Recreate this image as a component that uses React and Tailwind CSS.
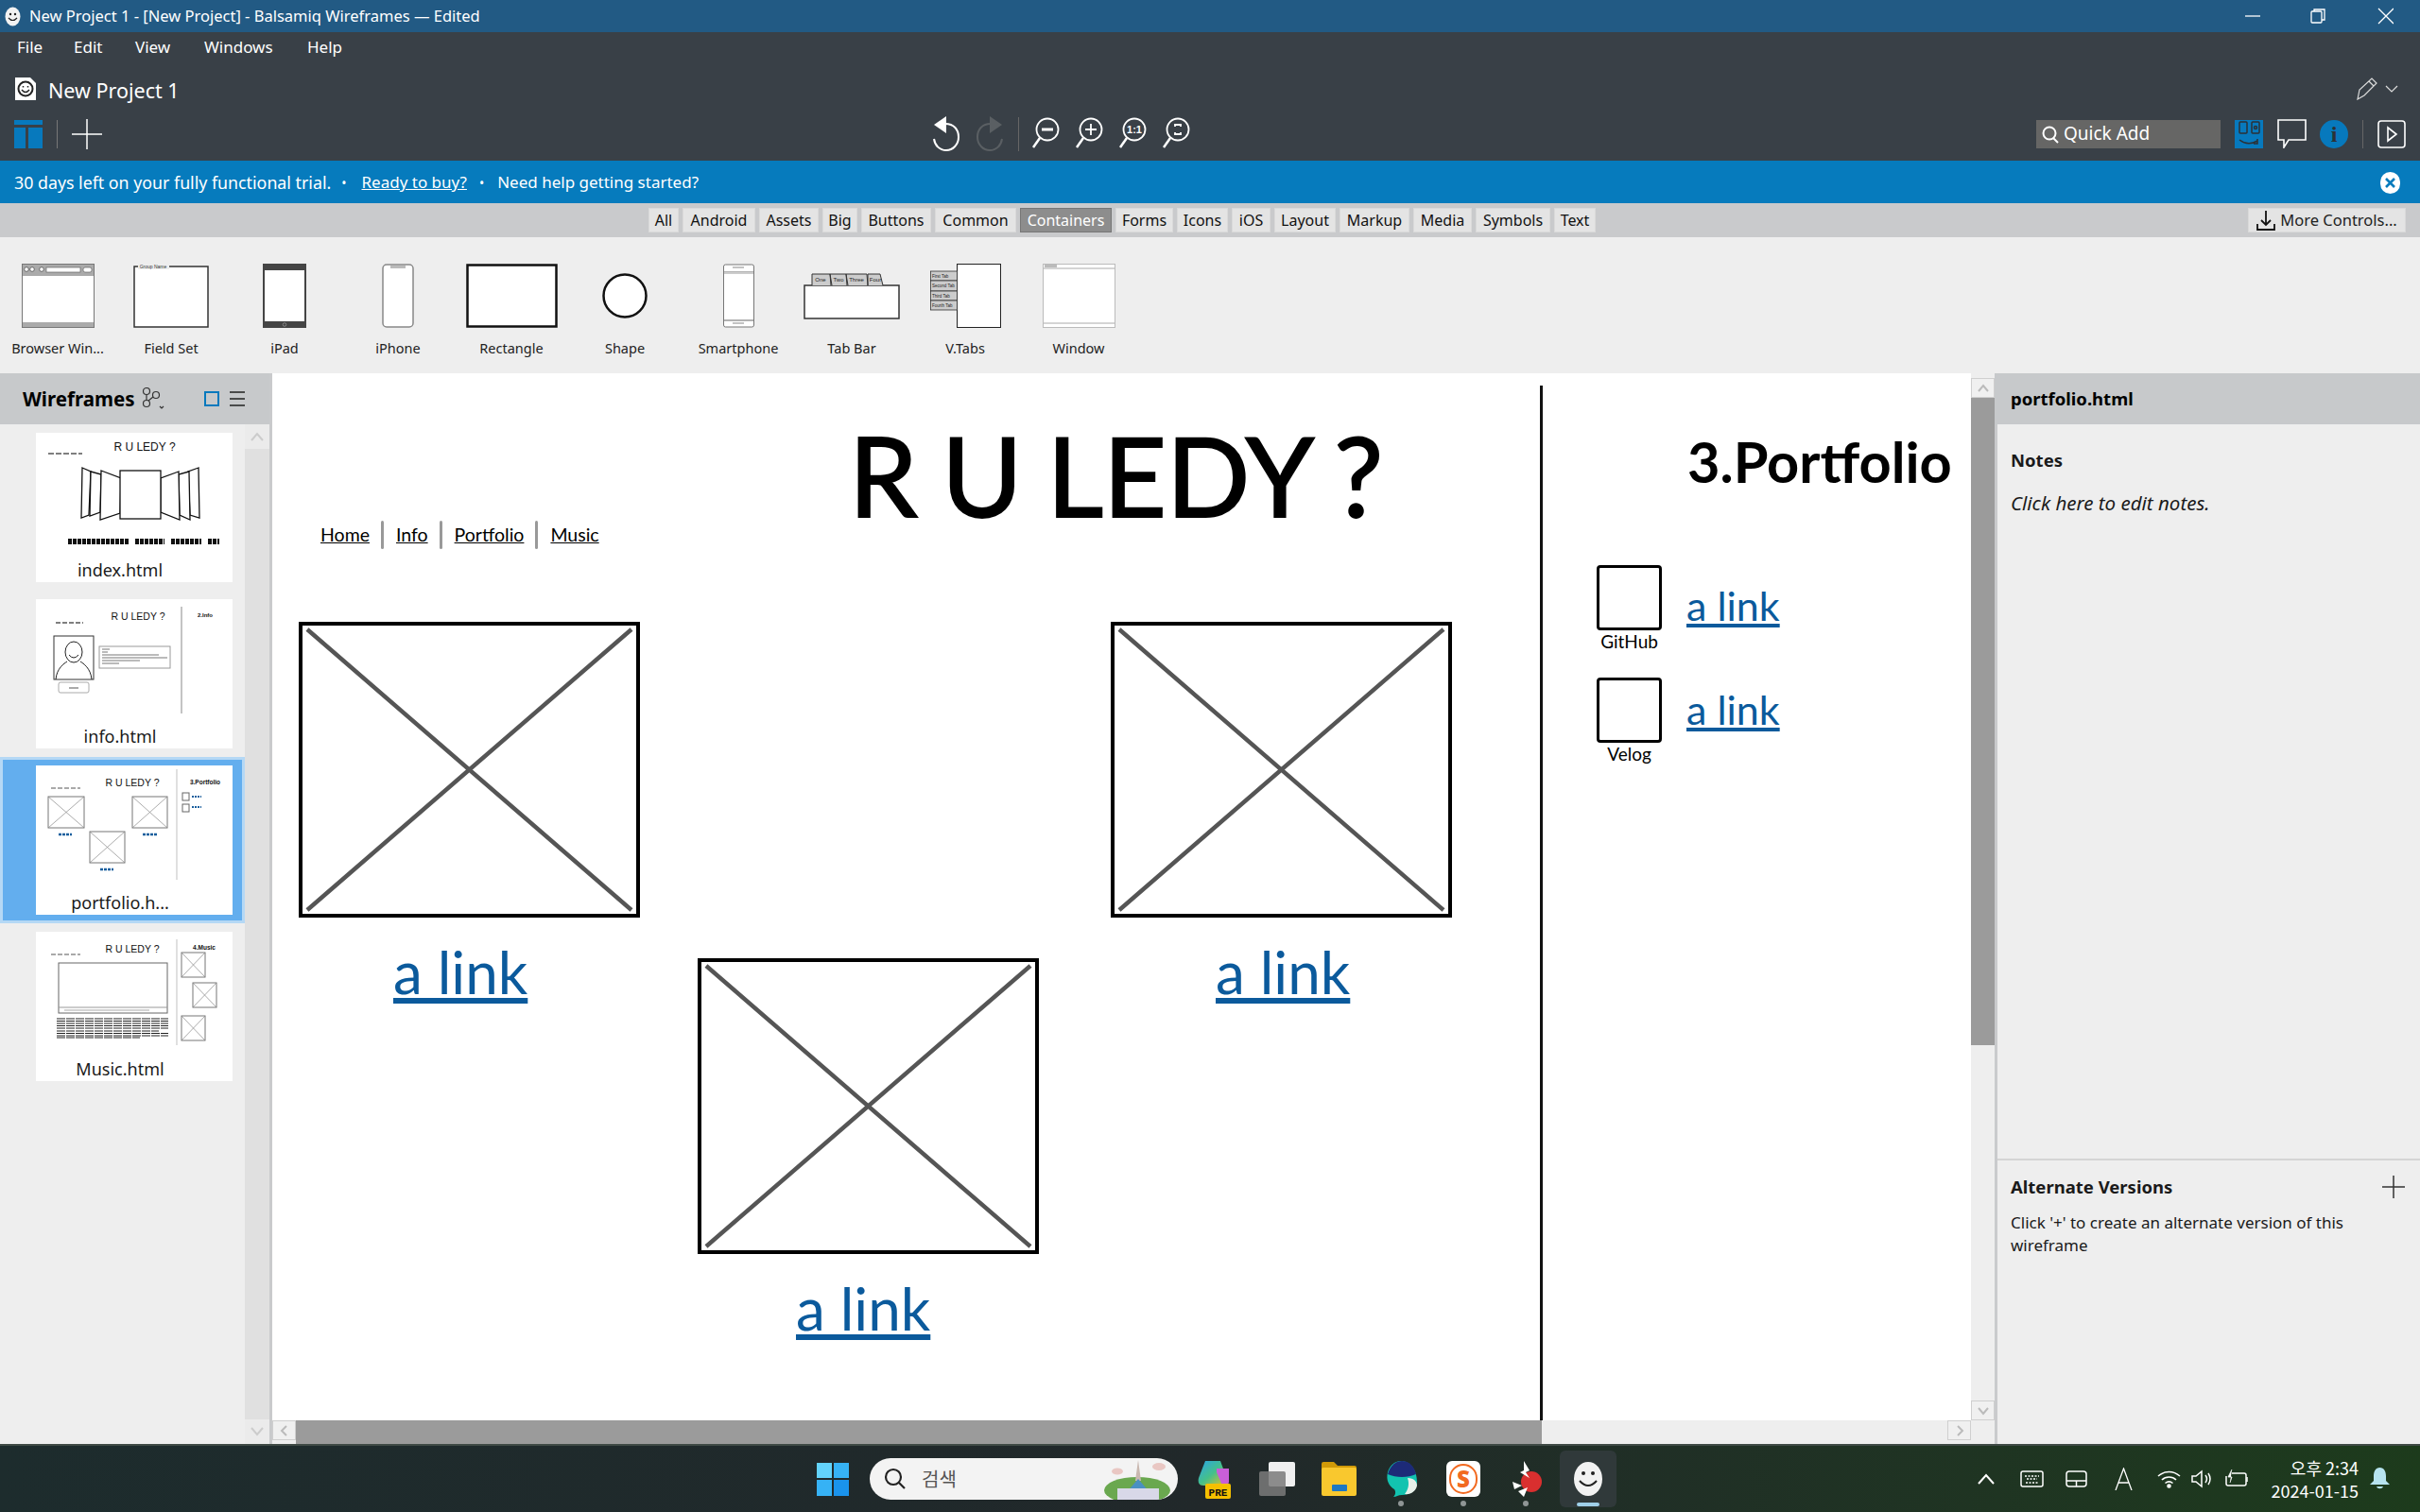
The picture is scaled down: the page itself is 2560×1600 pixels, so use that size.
import React from "react";

const Ph = ({ className }) => (
  <div className={"absolute w-[361px] h-[313px] bg-white border-[4px] border-black " + className}>
    <svg width="353" height="305" viewBox="0 0 353 305" className="block">
      <path d="M5 4 L348 301 M348 4 L5 301" stroke="#555" strokeWidth="4.5" fill="none" />
    </svg>
  </div>
);

const MiniPh = ({ x, y, w, h }) => (
  <g>
    <rect x={x} y={y} width={w} height={h} fill="#fff" stroke="#777" strokeWidth="1" />
    <path d={`M${x} ${y}L${x + w} ${y + h}M${x + w} ${y}L${x} ${y + h}`} stroke="#888" strokeWidth=".7" />
  </g>
);

const ThumbTitle = ({ x, y, t, size = 12, weight = 400 }) => (
  <text x={x} y={y} textAnchor="middle" fontSize={size} fontWeight={weight} fontFamily="Liberation Sans, sans-serif" fill="#111">{t}</text>
);

const Thumb1 = () => (
  <svg width="208" height="130" viewBox="0 0 208 130" className="block">
    <ThumbTitle x={115} y={19} t="R U LEDY ?" size={12} />
    <path d="M13 22H49" stroke="#555" strokeWidth="1.6" strokeDasharray="6 2" />
    <g fill="#fff" stroke="#111" strokeWidth="1.3">
      <path d="M49 37L58 41L56 87L48 90Z" />
      <path d="M58 41L69 44L68 84L57 88Z" />
      <path d="M69 40L90 48L89 85L68 92Z" />
      <path d="M172 37L161 41L163 87L173 90Z" />
      <path d="M162 41L151 44L152 87L163 92Z" />
      <path d="M151 41L132 48L132 84L152 92Z" />
      <rect x="89" y="40" width="43" height="51" />
    </g>
    <path d="M34 115H98M105 115H136M143 115H175M182 115H194" stroke="#111" strokeWidth="6" strokeDasharray="4 1" />
  </svg>
);

const Thumb2 = () => (
  <svg width="208" height="130" viewBox="0 0 208 130" className="block">
    <ThumbTitle x={108} y={22} t="R U LEDY ?" size={10.5} />
    <path d="M21 25H50" stroke="#555" strokeWidth="1.4" strokeDasharray="5 2" />
    <text x="179" y="19" textAnchor="middle" fontSize="6" fontWeight="700" fontFamily="Liberation Sans, sans-serif" fill="#111">2.Info</text>
    <path d="M154 8V121" stroke="#888" strokeWidth="1" />
    <rect x="19" y="39" width="42" height="46" fill="#fff" stroke="#333" />
    <ellipse cx="40" cy="56" rx="9" ry="11" fill="none" stroke="#222" />
    <path d="M21 85C22 73 30 68 33 66M59 85C58 73 50 68 47 66M35 59Q40 65 45 59" fill="none" stroke="#222" />
    <rect x="67" y="50" width="75" height="23" fill="#fff" stroke="#999" />
    <path d="M70 53H78M70 56H76M70 59H130M70 62H139M70 65H110M70 68H88" stroke="#777" strokeWidth="1" />
    <rect x="24" y="88" width="32" height="11" rx="2" fill="#fff" stroke="#aaa" />
    <path d="M35 94H45" stroke="#555" />
  </svg>
);

const Thumb3 = () => (
  <svg width="208" height="130" viewBox="0 0 208 130" className="block">
    <ThumbTitle x={102} y={22} t="R U LEDY ?" size={10.5} />
    <path d="M16 24H47" stroke="#555" strokeWidth="1.2" strokeDasharray="5 2" />
    <MiniPh x={13} y={33} w={38} h={33} />
    <MiniPh x={102} y={33} w={37} h={33} />
    <MiniPh x={57} y={70} w={37} h={33} />
    <g stroke="#1b5f9e" strokeWidth="2.4" strokeDasharray="3 1">
      <path d="M24 73H38M113 73H128M68 110H82" />
    </g>
    <path d="M149 4V121" stroke="#ccc" strokeWidth="1.2" />
    <text x="179" y="20" textAnchor="middle" fontSize="6.5" fontWeight="700" fontFamily="Liberation Sans, sans-serif" fill="#111">3.Portfolio</text>
    <rect x="155" y="29" width="7" height="8" fill="#fff" stroke="#666" />
    <rect x="155" y="41" width="7" height="8" fill="#fff" stroke="#666" />
    <path d="M165 33H175M165 44H175" stroke="#1b5f9e" strokeWidth="2" strokeDasharray="2 1" />
  </svg>
);

const Thumb4 = () => (
  <svg width="208" height="130" viewBox="0 0 208 130" className="block">
    <ThumbTitle x={102} y={22} t="R U LEDY ?" size={10.5} />
    <path d="M16 24H47" stroke="#555" strokeWidth="1.2" strokeDasharray="5 2" />
    <rect x="24" y="33" width="115" height="53" fill="#fff" stroke="#666" />
    <path d="M24 80H139" stroke="#999" />
    <path d="M30 83H120" stroke="#aaa" strokeWidth="1.2" />
    <path d="M22 92H140M22 94.500H140M22 97H140M22 99.500H140M22 102H140M22 105H130M22 107.500H140M22 110H140M22 112H110" stroke="#222" strokeWidth="1" strokeDasharray="9 1" />
    <path d="M149 8V120" stroke="#ccc" strokeWidth="1.2" />
    <text x="178" y="19" textAnchor="middle" fontSize="6.500" fontWeight="700" fontFamily="Liberation Sans, sans-serif" fill="#111">4.Music</text>
    <MiniPh x={154} y={22} w={25} h={26} />
    <MiniPh x={166} y={54} w={25} h={26} />
    <MiniPh x={154} y={89} w={25} h={26} />
  </svg>
);

const Card = ({ label, children }) => (
  <div className="w-[208px] h-[158px] bg-white flex flex-col">
    <div className="h-[133px]">{children}</div>
    <div className="pr-[30px] text-center text-[18px] leading-[24px] text-[#1a1a1a]">{label}</div>
  </div>
);

const ctlIcons = [
  <svg width="77" height="68" viewBox="0 0 77 68">
    <rect x=".5" y=".5" width="76" height="67" fill="#fff" stroke="#777" />
    <rect x="1" y="1" width="75" height="12" fill="#aaa" />
    <rect x="26" y="4" width="36" height="5" fill="#fff" stroke="#666" strokeWidth=".7" />
    <rect x="65" y="4" width="9" height="5" rx="2" fill="#fff" stroke="#666" strokeWidth=".7" />
    <circle cx="5" cy="6" r="2.300" fill="#fff" stroke="#444" strokeWidth=".7" />
    <circle cx="11" cy="6" r="2.300" fill="#fff" stroke="#444" strokeWidth=".7" />
    <circle cx="21" cy="6" r="2.300" fill="#fff" stroke="#444" strokeWidth=".7" />
    <rect x="1" y="62" width="75" height="5" fill="#aaa" />
  </svg>,
  <svg width="80" height="68" viewBox="0 0 80 68">
    <rect x="1" y="3" width="78" height="64" fill="#fff" stroke="#333" strokeWidth="1.500" />
    <rect x="5" y="0" width="33" height="6" fill="#eee" />
    <text x="21" y="5" textAnchor="middle" fontSize="5" fontFamily="Liberation Sans, sans-serif" fill="#333">Group Name</text>
  </svg>,
  <svg width="46" height="68" viewBox="0 0 46 68">
    <rect width="46" height="68" fill="#444" />
    <rect x="2" y="7" width="42" height="54" fill="#fff" />
    <circle cx="23" cy="64.500" r="1.800" fill="none" stroke="#999" strokeWidth=".7" />
  </svg>,
  <svg width="34" height="68" viewBox="0 0 34 68">
    <rect x="1" y="1" width="32" height="66" rx="4" fill="#fff" stroke="#888" strokeWidth="1.500" />
    <path d="M9 2H25V5H9Z" fill="#bbb" />
  </svg>,
  <svg width="97" height="68" viewBox="0 0 97 68">
    <rect x="1.500" y="1.500" width="94" height="65" fill="#fff" stroke="#111" strokeWidth="2.500" />
  </svg>,
  <svg width="48" height="48" viewBox="0 0 48 48">
    <ellipse cx="24" cy="24" rx="22.500" ry="22.500" fill="#fff" stroke="#111" strokeWidth="2.500" />
  </svg>,
  <svg width="33" height="68" viewBox="0 0 33 68">
    <rect x=".5" y="1" width="32" height="66" rx="2" fill="#fff" stroke="#777" />
    <path d="M1 9H32M1 60H32" stroke="#666" />
    <path d="M1 10H32" stroke="#ccc" strokeWidth="2" />
    <path d="M10 4H22M10 63H22" stroke="#888" strokeWidth="1.200" />
  </svg>,
  <svg width="102" height="49" viewBox="0 0 102 49">
    <rect x="1" y="13" width="100" height="35" fill="#fff" stroke="#333" strokeWidth="1.500" />
    <path d="M9 13V1H28L30 13M29 13L28 1H45L47 13M46 13L45 1H67L68 13M68 13V1H81L84 13" fill="#ccc" stroke="#333" />
    <g fontSize="6" fontFamily="Liberation Sans, sans-serif" fill="#222" textAnchor="middle">
      <text x="18" y="9">One</text><text x="37" y="9">Two</text><text x="56" y="9">Three</text><text x="76" y="9">Four</text>
    </g>
  </svg>,
  <svg width="75" height="68" viewBox="0 0 75 68">
    <rect x="28.500" y=".5" width="46" height="67" fill="#fff" stroke="#222" />
    <g fill="#ccc" stroke="#333" strokeWidth=".8">
      <rect x=".5" y="8" width="28" height="10" />
      <rect x=".5" y="18" width="28" height="11" />
      <rect x=".5" y="29" width="28" height="10" />
      <rect x=".5" y="39" width="28" height="10" />
    </g>
    <g fontSize="4.500" fontFamily="Liberation Sans, sans-serif" fill="#222">
      <text x="2" y="15">First Tab</text><text x="2" y="25">Second Tab</text><text x="2" y="36">Third Tab</text><text x="2" y="46">Fourth Tab</text>
    </g>
  </svg>,
  <svg width="77" height="68" viewBox="0 0 77 68">
    <rect x=".5" y=".5" width="76" height="67" fill="#fff" stroke="#bbb" />
    <path d="M1 5H76M1 63H76" stroke="#aaa" />
    <rect x="2" y="1" width="13" height="3" fill="#bbb" />
  </svg>,
];
const ctlLabels = ["Browser Win...", "Field Set", "iPad", "iPhone", "Rectangle", "Shape", "Smartphone", "Tab Bar", "V.Tabs", "Window"];

const tabs = [["All", 32], ["Android", 77], ["Assets", 63], ["Big", 37], ["Buttons", 74], ["Common", 86], ["Containers", 97], ["Forms", 61], ["Icons", 54], ["iOS", 41], ["Layout", 65], ["Markup", 74], ["Media", 62], ["Symbols", 79], ["Text", 44]];

const W = { fill: "none", stroke: "#fff", strokeWidth: 1.8 };

const Zoomer = ({ children }) => (
  <svg width="30" height="36" viewBox="0 0 30 36" {...W}>
    <circle cx="17" cy="13" r="11.500" />
    <path d="M9 22L2 32" strokeWidth="2.500" />
    {children}
  </svg>
);

function Chrome() {
  return (
    <div className="h-[136px] bg-[#394047] flex flex-col text-white">
      <div className="flex items-center h-[32px] pl-[18px] gap-[32px] text-[17px]">
        <span className="w-[28px]">File</span>
        <span className="w-[33px]">Edit</span>
        <span className="w-[41px]">View</span>
        <span className="w-[77px]">Windows</span>
        <span>Help</span>
      </div>
      <div className="flex items-center h-[50px] pl-[16px] pr-[22px] pt-[6px]">
        <svg width="22" height="24" viewBox="0 0 22 24">
          <path d="M0 0H16L22 6V24H0Z" fill="#fff" />
          <circle cx="11" cy="12" r="8.500" fill="#222" />
          <circle cx="11" cy="12" r="6.500" fill="#fff" />
          <path d="M7 13Q11 18 15 13" stroke="#222" strokeWidth="1.500" fill="none" />
          <path d="M8.500 9V10.500M13.500 9V10.500" stroke="#222" strokeWidth="1.500" />
        </svg>
        <span className="ml-[13px] mt-[3px] text-[21.500px] leading-none">New Project 1</span>
        <svg className="ml-auto" width="45" height="24" viewBox="0 0 45 24" fill="none" stroke="#ddd" strokeWidth="1.200">
          <path d="M1 23L3 13L16 1L21 6L8 19Z M13 4L18 9" />
          <path d="M31 9L37 15L43 9" />
        </svg>
      </div>
      <div className="flex items-center h-[54px] pl-[15px] pr-[15px] pb-[3px]">
        <svg width="30" height="30" viewBox="0 0 30 30">
          <path d="M0 0H30V5H0Z M0 8H12V30H0Z M15 8H30V30H15Z" fill="#0779bd" />
        </svg>
        <div className="w-px h-[30px] bg-[#777] ml-[15px] mr-[15px]" />
        <svg width="32" height="32" viewBox="0 0 32 32" stroke="#fff" strokeWidth="1.500"><path d="M16 0V32M0 16H32" /></svg>
        <div className="flex items-center ml-[878px]">
          <svg width="30" height="38" viewBox="0 0 30 38" fill="none" stroke="#fff" strokeWidth="2">
            <path d="M14 8C23 8 28 14 28 22C28 30 22 36 15 36C8 36 3 31 2 24" />
            <path d="M15 0V18L2 9Z" fill="#fff" stroke="none" />
          </svg>
          <svg className="ml-[16px]" width="30" height="38" viewBox="0 0 30 38" fill="none" stroke="#5a5f63" strokeWidth="2">
            <path d="M16 8C7 8 2 14 2 22C2 30 8 36 15 36C22 36 27 31 28 24" />
            <path d="M15 0V18L28 9Z" fill="#5a5f63" stroke="none" />
          </svg>
          <div className="ml-[15px] w-px h-[36px] bg-[#666]" />
          <div className="ml-[13px] flex items-center gap-[16px]">
            <Zoomer><path d="M11 13H23" strokeWidth="3" /></Zoomer>
            <Zoomer><path d="M11 13H23M17 7V19" /></Zoomer>
            <Zoomer><text x="17" y="17" textAnchor="middle" fontSize="11" fontWeight="700" fill="#fff" stroke="none" fontFamily="Liberation Sans, sans-serif">1:1</text></Zoomer>
            <Zoomer><path d="M14 10V8H20V10M14 16V18H20V16" /></Zoomer>
          </div>
        </div>
        <div className="ml-auto flex items-center w-[195px] h-[30px] bg-[#666665] pl-[5px] text-[19px]">
          <svg width="20" height="20" viewBox="0 0 20 20" fill="none" stroke="#fff" strokeWidth="2"><circle cx="9" cy="9" r="6.500" /><path d="M13 14L18 19" /></svg>
          <span className="ml-[4px]">Quick Add</span>
        </div>
        <div className="ml-[15px] w-[30px] h-[30px] bg-[#0779bd]">
          <svg width="30" height="30" viewBox="0 0 30 30" fill="none" stroke="#2c3136" strokeWidth="1.500">
            <rect x="5" y="2" width="8" height="12" rx="1" /><rect x="18" y="2" width="8" height="12" rx="1" /><circle cx="22" cy="8" r="1.500" />
            <path d="M5 21Q14 28 24 22M24 20V25H20" />
          </svg>
        </div>
        <svg className="ml-[15px]" width="31" height="31" viewBox="0 0 31 31" fill="none" stroke="#fff" strokeWidth="1.600">
          <path d="M1 1H30V22H12L7 30V22H1Z" />
        </svg>
        <div className="ml-[14px] w-[30px] h-[30px] rounded-full bg-[#0779bd] flex items-center justify-center text-[24px] font-bold text-[#2c3136] font-['Liberation_Serif',serif] leading-none">i</div>
        <div className="w-px h-[30px] bg-[#666] ml-[15px] mr-[15px]" />
        <svg width="30" height="30" viewBox="0 0 30 30" fill="none" stroke="#fff" strokeWidth="1.600">
          <rect x="1" y="1" width="28" height="28" rx="3" /><path d="M11 8L20 15L11 22Z" />
        </svg>
      </div>
    </div>
  );
}

function Taskbar() {
  return (
    <div className="h-[72px] border-t-[2px] border-[#3f4a45] bg-gradient-to-r from-[#1d2c2d] via-[#21282a] to-[#1d3b1c] flex items-center text-white relative">
      <div className="ml-[864px] grid grid-cols-2 gap-[2px] w-[34px] h-[35px]">
        <div className="bg-[#63d3fb]" /><div className="bg-[#36b2f5]" /><div className="bg-[#36b2f5]" /><div className="bg-[#1a93ec]" />
      </div>
      <div className="ml-[22px] w-[326px] h-[44px] rounded-full bg-[#f3f3f3] flex items-center pl-[15px] overflow-hidden">
        <svg width="24" height="24" viewBox="0 0 24 24" fill="none" stroke="#222" strokeWidth="2.200"><circle cx="10" cy="10" r="8" /><path d="M16 16L22 22" /></svg>
        <span className="ml-[16px] text-[20px] text-[#555] font-['Noto_Sans_CJK_KR',sans-serif]">검색</span>
        <svg className="ml-auto" width="78" height="44" viewBox="0 0 78 44">
          <ellipse cx="14" cy="14" rx="6" ry="3.500" fill="#e9c7c3" />
          <ellipse cx="58" cy="9" rx="7" ry="4" fill="#e9c7c3" />
          <ellipse cx="35" cy="34" rx="35" ry="14" fill="#6aa84f" />
          <path d="M36 2L39 24H33Z" fill="#c9b8b0" />
          <path d="M24 36L36 22L48 36Z" fill="#4a90c2" />
          <rect x="14" y="32" width="44" height="12" fill="#d8d8e8" />
        </svg>
      </div>
      <svg className="ml-[21px]" width="36" height="42" viewBox="0 0 36 42">
        <defs>
          <linearGradient id="cp" x1="0" y1="0" x2="1" y2="1"><stop offset="0" stopColor="#2aa4e8" /><stop offset=".5" stopColor="#45c08a" /><stop offset="1" stopColor="#f0c020" /></linearGradient>
        </defs>
        <path d="M8 2H24L32 24C32 28 28 28 24 28H6C1 28 0 24 1 20Z" fill="url(#cp)" />
        <path d="M20 10H33V24C33 28 28 28 26 28L20 14Z" fill="#c85fd8" />
        <rect x="8" y="26" width="27" height="16" rx="2" fill="#f5c000" />
        <text x="21.500" y="38.500" textAnchor="middle" fontSize="11" fontWeight="700" fontFamily="Liberation Mono, monospace" fill="#111">PRE</text>
      </svg>
      <svg className="ml-[29px]" width="38" height="36" viewBox="0 0 38 36">
        <rect x="10" y="0" width="28" height="26" rx="2" fill="#f0f0f0" />
        <rect x="0" y="10" width="28" height="26" rx="2" fill="#7a7a7a" fillOpacity=".85" />
      </svg>
      <svg className="ml-[28px]" width="37" height="36" viewBox="0 0 37 36">
        <path d="M0 2Q0 0 2 0H13L17 4H35Q37 4 37 6V10H0Z" fill="#d19a08" />
        <rect y="6" width="37" height="30" rx="2" fill="#f9c82e" />
        <rect x="11" y="24" width="16" height="7" rx="1" fill="#1d78c4" />
      </svg>
      <svg className="ml-[30px]" width="35" height="38" viewBox="0 0 35 38">
        <path d="M17 0C27 0 34 10 34 22C34 31 27 36 18 36C14 36 12 38 9 38C11 36 12 33 10 30C4 26 1 20 3 12C5 5 10 0 17 0Z" fill="#12c3b0" />
        <path d="M3 14C6 4 12 0 18 0C26 0 31 6 33 14C24 18 12 18 3 14Z" fill="#1d2a78" />
        <path d="M24 18C31 18 34 22 34 26C33 32 27 36 21 35C25 30 26 24 24 18Z" fill="#e8f0ea" />
      </svg>
      <div className="ml-[30px] w-[36px] h-[38px] rounded-[6px] bg-white flex items-center justify-center">
        <div className="w-[30px] h-[32px] rounded-full border-[2px] border-[#f26a21] flex items-center justify-center text-[#f26a21] text-[24px] font-black leading-none">S</div>
      </div>
      <svg className="ml-[32px]" width="35" height="38" viewBox="0 0 35 38">
        <circle cx="22" cy="22" r="11" fill="#d92f2f" />
        <path d="M14 0L20 10L16 12L20 18L10 12L14 10ZM2 22L12 26L4 30ZM8 32L18 28L14 38Z" fill="#fff" />
      </svg>
      <div className="ml-[17px] w-[60px] h-[60px] rounded-[6px] bg-[#30393a] flex items-center justify-center relative">
        <svg width="30" height="36" viewBox="0 0 30 36">
          <ellipse cx="15" cy="18" rx="15" ry="18" fill="#f2f2f2" />
          <circle cx="10" cy="12" r="2" fill="#222" /><circle cx="20" cy="12" r="2" fill="#222" />
          <path d="M6 20Q15 30 24 20" stroke="#222" strokeWidth="2" fill="none" />
        </svg>
        <div className="absolute bottom-[1px] left-[18px] w-[24px] h-[4px] rounded bg-[#9fd0e8]" />
      </div>
      <div className="absolute top-[58px] left-[1479px] w-[6px] h-[6px] rounded-full bg-[#8f9595]" />
      <div className="absolute top-[58px] left-[1545px] w-[6px] h-[6px] rounded-full bg-[#8f9595]" />
      <div className="absolute top-[58px] left-[1611px] w-[6px] h-[6px] rounded-full bg-[#8f9595]" />

      <svg className="ml-[382px]" width="18" height="12" viewBox="0 0 18 12" fill="none" stroke="#fff" strokeWidth="2"><path d="M1 11L9 2L17 11" /></svg>
      <svg className="ml-[27px]" width="25" height="18" viewBox="0 0 25 18" fill="none" stroke="#fff" strokeWidth="1.500">
        <rect x="1" y="1" width="23" height="16" rx="2" /><path d="M5 6H20M7 9H18M6 13H19" strokeDasharray="2 1.500" />
      </svg>
      <svg className="ml-[23px]" width="23" height="18" viewBox="0 0 23 18" fill="none" stroke="#fff" strokeWidth="1.500">
        <rect x="1" y="1" width="21" height="16" rx="3" /><path d="M1 11H22M11.500 11V17" />
      </svg>
      <svg className="ml-[29px]" width="19" height="24" viewBox="0 0 19 24" fill="none" stroke="#fff" strokeWidth="1.300"><path d="M1 24L9.500 1L18 24M4 16H15" /></svg>
      <svg className="ml-[26px]" width="25" height="19" viewBox="0 0 25 19" fill="none" stroke="#fff" strokeWidth="1.600">
        <path d="M1 6C8 0 17 0 24 6M5 10C9 6 16 6 20 10M8.500 13.500C11 11.500 14 11.500 16.500 13.500" /><circle cx="12.500" cy="16.500" r="1.500" fill="#fff" />
      </svg>
      <svg className="ml-[11px]" width="25" height="20" viewBox="0 0 25 20" fill="none" stroke="#fff" strokeWidth="1.500">
        <path d="M1 7H5L11 2V18L5 13H1Z M15 6Q18 10 15 14M18 4Q22 10 18 16" />
      </svg>
      <svg className="ml-[11px]" width="25" height="20" viewBox="0 0 25 20" fill="none" stroke="#fff" strokeWidth="1.500">
        <path d="M7 4H20Q22 4 22 6V15Q22 17 20 17H3Q1 17 1 15V7" /><path d="M23 8V13" />
        <path d="M7 0L3 8H7L5 14" fill="#fff" stroke="#fff" strokeWidth=".8" />
      </svg>
      <div className="ml-auto flex flex-col items-end text-[18px] leading-[24px] font-['Noto_Sans_CJK_KR',sans-serif]">
        <span>오후 2:34</span>
        <span>2024-01-15</span>
      </div>
      <svg className="ml-[12px] mr-[32px]" width="21" height="24" viewBox="0 0 21 24">
        <path d="M10.500 0C15 0 17 4 17 9V14L21 18H0L4 14V9C4 4 6 0 10.500 0ZM7 20H14C13 23 8 23 7 20Z" fill="#b6e3ef" />
      </svg>
    </div>
  );
}

const ArrowBox = ({ d }) => (
  <div className="w-[25px] h-[21px] shrink-0 bg-[#f0f0f0] border border-[#cfcfcf] flex items-center justify-center">
    <svg width="14" height="14" viewBox="0 0 14 14" fill="none" stroke="#bbb" strokeWidth="2"><path d={d} /></svg>
  </div>
);

export default function App() {
  return (
    <div className="w-[2560px] h-[1600px] overflow-hidden flex flex-col bg-[#eee] font-['Noto_Sans',sans-serif]">
      <div className="h-[34px] bg-[#225a84] flex items-center text-white text-[16.500px] pl-[5px] pr-[28px]">
        <svg width="17" height="21" viewBox="0 0 17 21">
          <ellipse cx="8.500" cy="10.500" rx="8" ry="10" fill="#f2f2f2" />
          <circle cx="6" cy="8" r="1.200" fill="#222" /><circle cx="11" cy="8" r="1.200" fill="#222" />
          <path d="M4 12Q8.500 17 13 12" stroke="#222" strokeWidth="1.200" fill="none" />
        </svg>
        <span className="ml-[9px]">New Project 1 - [New Project] - Balsamiq Wireframes — Edited</span>
        <svg className="ml-auto" width="157" height="18" viewBox="0 0 157 18" fill="none" stroke="#fff" strokeWidth="1.300">
          <path d="M0 9H16" />
          <rect x="70" y="4" width="11" height="12" rx="1" /><path d="M73 4V2H84V13H81" />
          <path d="M141 1L157 17M157 1L141 17" />
        </svg>
      </div>

      <Chrome />

      <div className="h-[45px] bg-[#067bbd] flex items-center text-white pl-[15px] pr-[21px] pt-[1px]">
        <span className="text-[17.800px]">30 days left on your fully functional trial.</span>
        <span className="ml-[11px] text-[14px]">•</span>
        <span className="ml-[16px] text-[17px] underline">Ready to buy?</span>
        <span className="ml-[13px] text-[14px]">•</span>
        <span className="ml-[14px] text-[17px]">Need help getting started?</span>
        <div className="ml-auto w-[21px] h-[23px] rounded-full bg-white flex items-center justify-center">
          <svg width="11" height="11" viewBox="0 0 11 11" stroke="#067bbd" strokeWidth="2.600"><path d="M1 1L10 10M10 1L1 10" /></svg>
        </div>
      </div>

      <div className="h-[36px] bg-[#c9cacc] flex items-center pl-[686px] pr-[15px] text-[16px]">
        <div className="flex gap-[4px]">
          {tabs.map(([t, w]) => (
            <div key={t} style={{ width: w }} className={"h-[26px] flex items-center justify-center border whitespace-nowrap " + (t === "Containers" ? "bg-[#8d8d8d] border-[#777] text-white" : "bg-[#e4e4e4] border-[#dadada] text-[#111]")}>{t}</div>
          ))}
        </div>
        <div className="ml-auto w-[167px] h-[26px] bg-[#e4e4e4] border border-[#dadada] flex items-center justify-center gap-[5px] text-[#222]">
          <svg width="20" height="22" viewBox="0 0 20 22" fill="none" stroke="#111" strokeWidth="1.800"><path d="M10 1V16M5 11L10 16L15 11M1 15V21H19V15" /></svg>
          <span className="text-[16.500px]">More Controls...</span>
        </div>
      </div>

      <div className="h-[144px] bg-[#eee] flex pl-[1px]">
        {ctlLabels.map((l, i) => (
          <div key={l} className="w-[120px] flex flex-col items-center pt-[27px]">
            <div className="h-[70px] flex items-center justify-center">{ctlIcons[i]}</div>
            <div className="mt-[10px] text-[14.500px] leading-[20px] text-[#222] whitespace-nowrap">{l}</div>
          </div>
        ))}
      </div>

      <div className="flex-1 flex min-h-0">
        <div className="w-[288px] flex flex-col border-r-[3px] border-[#c9cacc]">
          <div className="h-[54px] bg-[#c7c9cb] flex items-center pl-[24px] pr-[26px] shrink-0">
            <span className="text-[20.500px] font-bold text-black">Wireframes</span>
            <svg className="ml-[8px]" width="26" height="24" viewBox="0 0 26 24" fill="none" stroke="#333" strokeWidth="1.200">
              <circle cx="5" cy="4" r="3.500" /><circle cx="13" cy="8" r="3.500" transform="translate(2)" /><circle cx="5" cy="17" r="3.500" />
              <path d="M5 7.500V13.500M12 10L7 14" /><path d="M19 20L21 22L23 20" />
            </svg>
            <div className="ml-auto w-[16px] h-[16px] border-[2px] border-[#0779bd]" />
            <svg className="ml-[11px]" width="16" height="16" viewBox="0 0 16 16" stroke="#222" strokeWidth="1.500"><path d="M0 1H16M0 8H16M0 15H16" /></svg>
          </div>
          <div className="flex-1 flex min-h-0">
            <div className="w-[259px] flex flex-col items-start pl-[38px] pt-[9px] gap-[18px]">
              <Card label="index.html"><Thumb1 /></Card>
              <Card label="info.html"><Thumb2 /></Card>
              <div className="w-[259px] h-[176px] -my-[9px] -ml-[38px] shrink-0 bg-[#63aeee] border-[3px] border-[#b5d8f5] flex items-center pl-[35px]">
                <Card label="portfolio.h..."><Thumb3 /></Card>
              </div>
              <Card label="Music.html"><Thumb4 /></Card>
            </div>
            <div className="w-[26px] bg-[#e0e0e0] flex flex-col justify-between">
              <div className="h-[26px] bg-[#ebebeb] flex items-center justify-center">
                <svg width="14" height="10" viewBox="0 0 14 10" fill="none" stroke="#ccc" strokeWidth="2"><path d="M1 9L7 2L13 9" /></svg>
              </div>
              <div className="h-[26px] bg-[#ebebeb] flex items-center justify-center">
                <svg width="14" height="10" viewBox="0 0 14 10" fill="none" stroke="#ccc" strokeWidth="2"><path d="M1 1L7 8L13 1" /></svg>
              </div>
            </div>
          </div>
        </div>

        <div className="w-[1822px] flex flex-col">
          <div className="flex-1 flex min-h-0">
            <div className="flex-1 bg-white relative overflow-hidden font-['Lato',sans-serif] text-black">
              <div className="absolute left-[610px] top-[38px] text-[116px] leading-[140px] [-webkit-text-stroke:2px_black] [word-spacing:-4px] whitespace-nowrap">R U LEDY ?</div>
              <div className="absolute left-[51px] top-[156px] flex items-center text-[19.500px] leading-[26px]">
                <span className="underline">Home</span>
                <span className="w-[3px] h-[30px] ml-[12px] mr-[13px] bg-[#999] rounded" />
                <span className="underline">Info</span>
                <span className="w-[3px] h-[30px] ml-[12px] mr-[13px] bg-[#999] rounded" />
                <span className="underline">Portfolio</span>
                <span className="w-[3px] h-[30px] ml-[12px] mr-[13px] bg-[#999] rounded" />
                <span className="underline">Music</span>
              </div>
              <Ph className="left-[28px] top-[263px]" />
              <Ph className="left-[887px] top-[263px]" />
              <Ph className="left-[450px] top-[619px]" />
              <div className="absolute left-[128px] top-[593px] text-[62px] leading-[80px] text-[#0b5a9c] underline">a link</div>
              <div className="absolute left-[998px] top-[593px] text-[62px] leading-[80px] text-[#0b5a9c] underline">a link</div>
              <div className="absolute left-[554px] top-[949px] text-[62px] leading-[80px] text-[#0b5a9c] underline">a link</div>
              <div className="absolute left-[1341px] top-[13px] w-[3px] h-[1095px] bg-[#111]" />
              <div className="absolute left-[1497px] top-[53px] text-[59.500px] leading-[80px] font-bold whitespace-nowrap">3.Portfolio</div>
              <div className="absolute left-[1401px] top-[203px] w-[69px] h-[69px] border-[3px] border-black rounded-[4px]" />
              <div className="absolute left-[1401px] top-[322px] w-[69px] h-[69px] border-[3px] border-black rounded-[4px]" />
              <div className="absolute left-[1401px] top-[272px] w-[69px] text-center text-[19px] leading-[24px]">GitHub</div>
              <div className="absolute left-[1401px] top-[391px] w-[69px] text-center text-[19px] leading-[24px]">Velog</div>
              <div className="absolute left-[1496px] top-[218px] text-[43px] leading-[56px] text-[#0b5a9c] underline">a link</div>
              <div className="absolute left-[1496px] top-[328px] text-[43px] leading-[56px] text-[#0b5a9c] underline">a link</div>
            </div>
            <div className="w-[25px] bg-[#eee] flex flex-col items-stretch pt-[5px]">
              <ArrowBox d="M2 10L7 4L12 10" />
              <div className="h-[685px] bg-[#9b9b9b]" />
              <div className="mt-auto"><ArrowBox d="M2 4L7 10L12 4" /></div>
            </div>
          </div>
          <div className="h-[25px] flex bg-[#eee]">
            <ArrowBox d="M9 2L4 7L9 12" />
            <div className="w-[1318px] bg-[#9b9b9b]" />
            <div className="ml-auto mr-[25px]"><ArrowBox d="M5 2L10 7L5 12" /></div>
          </div>
        </div>

        <div className="flex-1 flex flex-col bg-[#eee] text-[#1a1a1a]">
          <div className="h-[54px] bg-[#c7c9cb] flex items-center pl-[17px] text-[18.500px] font-bold text-black shrink-0">portfolio.html</div>
          <div className="flex-1 flex flex-col border-l-[3px] border-[#c9cacc]">
            <div className="pl-[14px] pt-[25px] text-[18.500px] font-bold leading-[26px]">Notes</div>
            <div className="pl-[14px] pt-[19px] text-[20.500px] italic leading-[26px]">Click here to edit notes.</div>
            <div className="mt-[681px] border-t-[2px] border-[#d4d4d4] pl-[14px] pr-[16px] pt-[15px] flex-1">
              <div className="flex items-center justify-between h-[26px]">
                <span className="text-[18.500px] font-bold">Alternate Versions</span>
                <svg width="24" height="24" viewBox="0 0 24 24" stroke="#333" strokeWidth="1.500"><path d="M12 0V24M0 12H24" /></svg>
              </div>
              <div className="mt-[13px] text-[17px] leading-[24px]">Click '+' to create an alternate version of this<br />wireframe</div>
            </div>
          </div>
        </div>
      </div>

      <Taskbar />
    </div>
  );
}
